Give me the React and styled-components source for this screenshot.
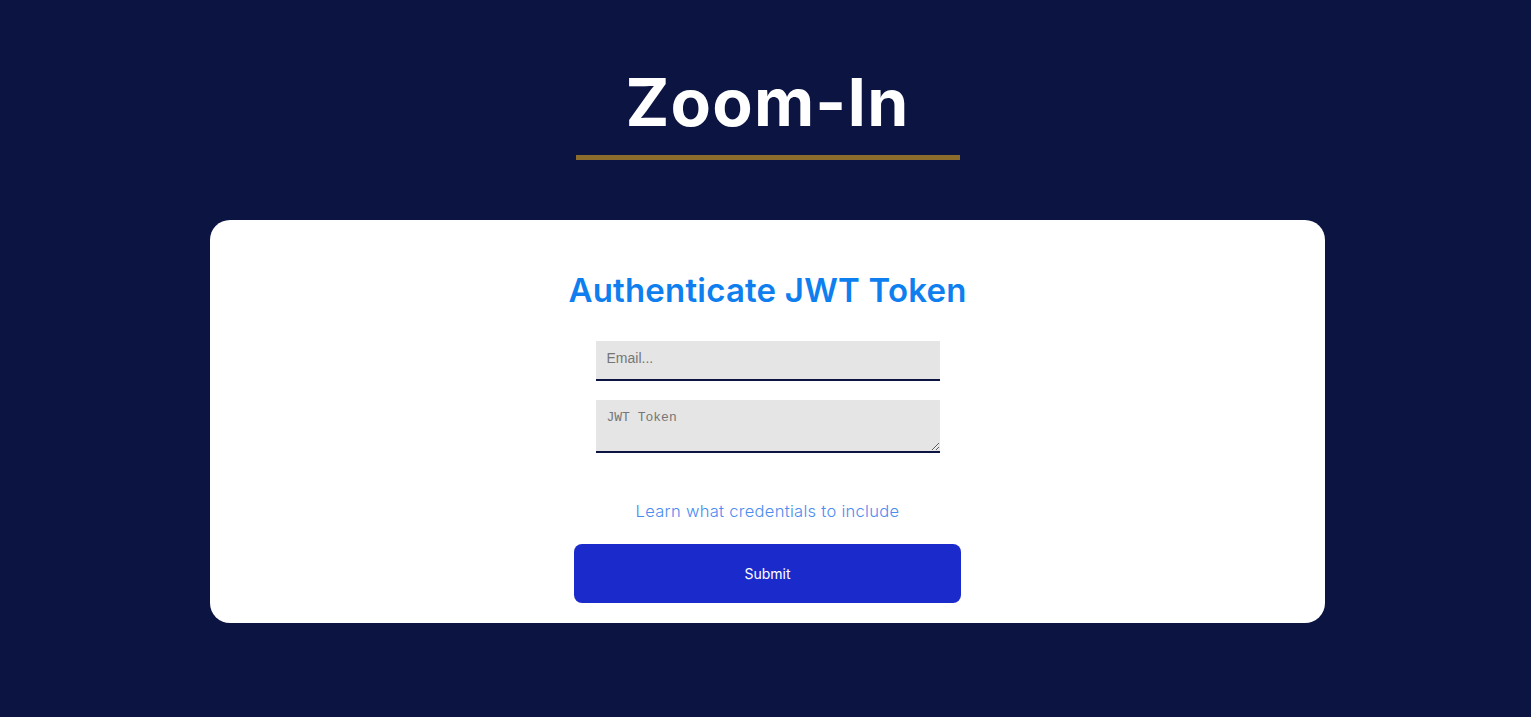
import React from "react";
import styled, { createGlobalStyle } from "styled-components";

const Global = createGlobalStyle`
  html, body { margin: 0; padding: 0; background: #0c1442; }
  body { font-family: "Inter", "Noto Sans", sans-serif; }
  * { box-sizing: border-box; }
`;

const Page = styled.main`
  min-height: 717px;
  display: flex;
  flex-direction: column;
  align-items: center;
  padding: 62px 0 0 4px;
`;

const Title = styled.h1`
  margin: 0;
  font-family: "Inter", sans-serif;
  font-weight: 700;
  font-size: 66px;
  line-height: 80px;
  color: #ffffff;
  letter-spacing: 1.2px;
`;

const Rule = styled.div`
  width: 384px;
  height: 5px;
  background: #8b6c2c;
  margin-top: 13px;
`;

const Card = styled.section`
  margin-top: 60px;
  width: 1115px;
  background: #ffffff;
  border-radius: 20px;
  display: flex;
  flex-direction: column;
  align-items: center;
  padding: 50px 0 20px;
`;

const Heading = styled.h2`
  margin: 0;
  font-family: "Inter", sans-serif;
  font-weight: 600;
  font-size: 33px;
  line-height: 40px;
  color: #0f7ff0;
  letter-spacing: 0.2px;
`;

const Form = styled.form`
  display: flex;
  flex-direction: column;
  align-items: center;
  margin-top: 31px;
`;

const Field = styled.input`
  width: 344px;
  height: 40px;
  border: none;
  border-bottom: 2px solid #0c1442;
  background: #e5e5e5;
  padding: 0 11px 4px;
  font-family: "Liberation Sans", Arial, sans-serif;
  font-size: 14px;
  color: #333;
  outline: none;
  &::placeholder { color: #767676; }
`;

const Area = styled.textarea`
  display: block;
  margin-top: 19px;
  width: 344px;
  height: 53px;
  border: none;
  border-bottom: 2px solid #0c1442;
  background: #e5e5e5;
  padding: 10px 11px;
  font-family: "Liberation Mono", "DejaVu Sans Mono", monospace;
  font-size: 13px;
  color: #333;
  outline: none;
  resize: vertical;
  &::placeholder { color: #767676; }
`;

const Help = styled.a`
  margin-top: 48px;
  font-family: "Inter", sans-serif;
  font-weight: 300;
  font-size: 16.5px;
  line-height: 20px;
  letter-spacing: 0.3px;
  color: #4a8cf0;
  text-decoration: none;
  cursor: pointer;
`;

const Submit = styled.button`
  margin-top: 23px;
  width: 387px;
  height: 59px;
  border: none;
  border-radius: 8px;
  background: #1b2bcb;
  color: #ffffff;
  font-family: "Inter", sans-serif;
  font-size: 14px;
  font-weight: 400;
  cursor: pointer;
`;

export default function App() {
  return (
    <>
      <Global />
      <Page>
        <Title>Zoom-In</Title>
        <Rule />
        <Card>
          <Heading>Authenticate JWT Token</Heading>
          <Form onSubmit={(e) => e.preventDefault()}>
            <Field type="email" placeholder="Email..." />
            <Area placeholder="JWT Token" />
            <Help>Learn what credentials to include</Help>
            <Submit type="submit">Submit</Submit>
          </Form>
        </Card>
      </Page>
    </>
  );
}
